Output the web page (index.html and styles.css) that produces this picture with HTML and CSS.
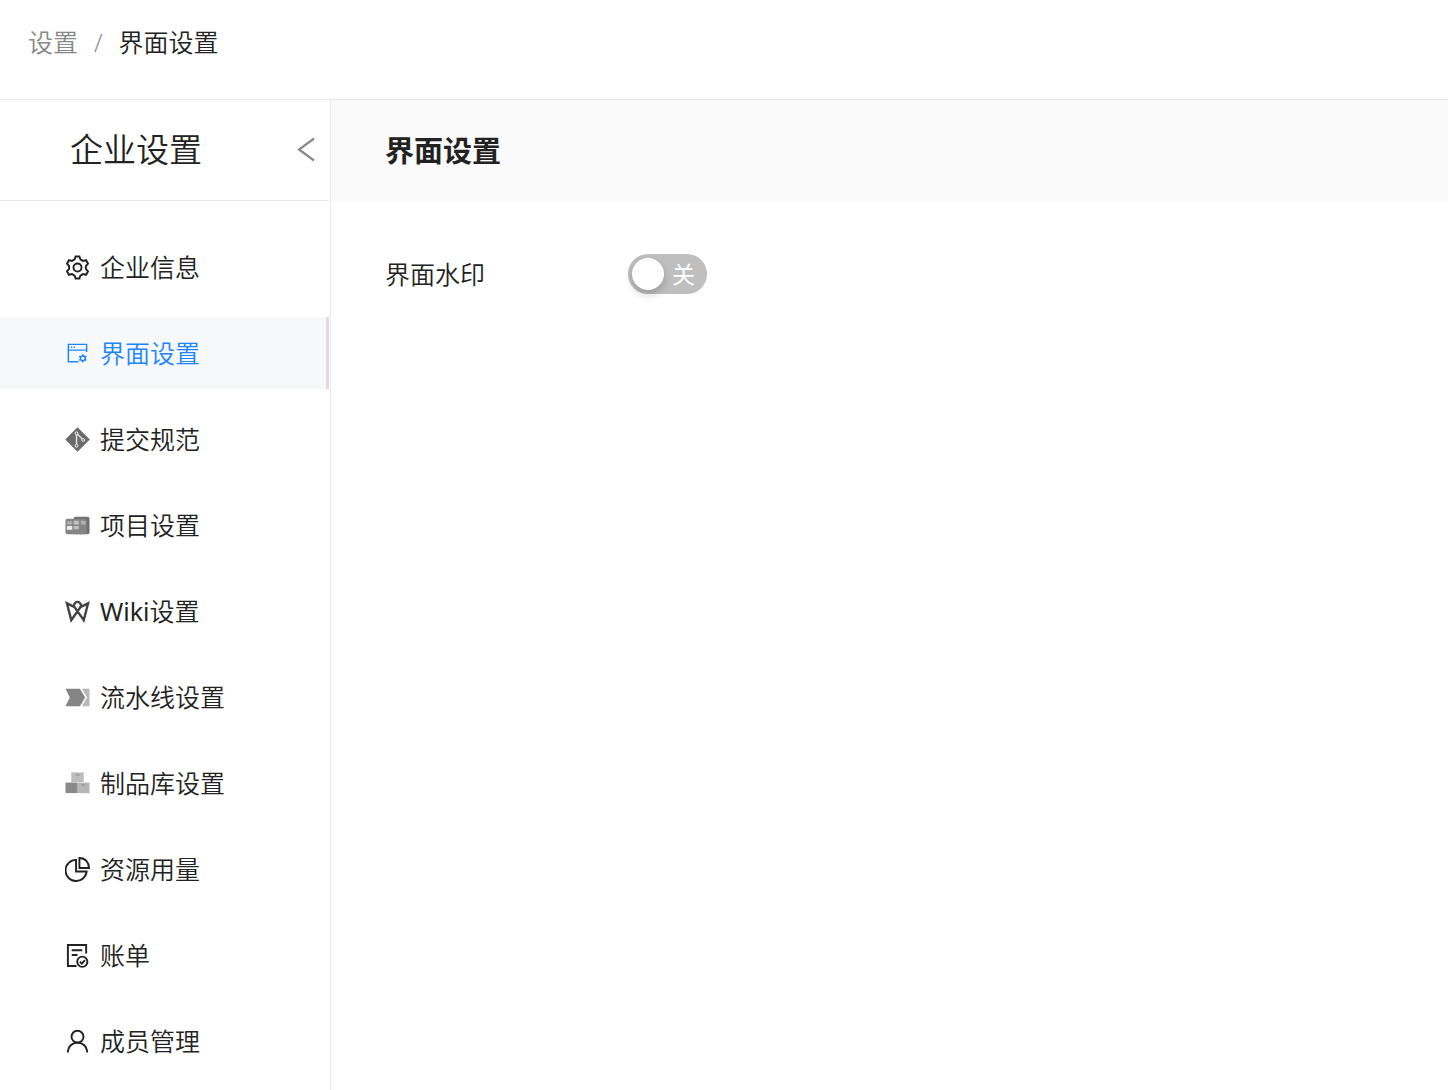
FILE: index.html
```html
<!DOCTYPE html>
<html lang="zh-CN">
<head>
    <meta charset="utf-8">
    <title>界面设置</title>
    <link rel="stylesheet" href="styles.css">
</head>
<body>
    <nav class="breadcrumb">
        <a href="#">设置</a>
        <span class="separator">/</span>
        <span class="current">界面设置</span>
    </nav>
    <div class="container">
        <aside class="sidebar">
            <header class="sidebar-header">
                <h2>企业设置</h2>
                <button type="button" class="collapse" aria-label="收起">
                    <svg width="18" height="26" viewBox="0 0 18 26"><path d="M17 1.500 2 12.500l15 11" fill="none" stroke="#8a8a8a" stroke-width="2.200"/></svg>
                </button>
            </header>
            <ul class="menu">
                <li><a href="#">
                    <svg class="icon line" viewBox="0 0 26 26"><path d="M10 4.600 11 1.500h4l1 3.100 2.700 1.500 3.200-.7 2 3.500L21.700 11.500v3l2.200 2.600-2 3.500-3.200-.7-2.700 1.500-1 3.100h-4l-1-3.100-2.700-1.500-3.200.7-2-3.500 2.200-2.600v-3L2.100 8.900l2-3.500 3.200.7z"/><circle cx="13" cy="13" r="4.200"/></svg>
                    企业信息</a></li>
                <li class="active"><a href="#">
                    <svg class="icon thin" viewBox="0 0 26 26"><path d="M14 21.500H3.500V3.500h19v8M3.500 9.500h19M6 6.500h1.500M9 6.500h1.500"/><circle cx="18.500" cy="18" r="2.500"/><path d="M18.500 13.700v1.800M18.500 20.500v1.800M14.800 15.800l1.500 1M20.700 19.200l1.500 1M22.200 15.800l-1.500 1M16.300 19.200l-1.500 1"/></svg>
                    界面设置</a></li>
                <li><a href="#">
                    <svg class="icon" viewBox="0 0 26 26"><path d="M13 .8 25.200 13 13 25.200.8 13z" fill="#6b6b6b" stroke="#6b6b6b" stroke-linejoin="round"/><path d="M12 7v12.500M12.500 7l6.500 6.500" fill="none" stroke="#e4e4e4" stroke-width="1.500"/><g fill="#777" stroke="#eee"><circle cx="12" cy="6.500" r="1.500"/><circle cx="12" cy="19.500" r="1.500"/><circle cx="19" cy="13.500" r="1.500"/></g></svg>
                    提交规范</a></li>
                <li><a href="#">
                    <svg class="icon" viewBox="0 0 26 26"><path d="M9 6q0-2 2-2h12.500Q25.500 4 25.500 6v14q0 2-2 2H9z" fill="#707070"/><rect x=".5" y="6" width="22" height="16" rx="2" fill="#858585"/><path d="M2 8.500h5.500v3.500H2zM16.500 8h5v4h-5z" fill="#b0b0b0"/><path d="M9 8h5.500v4H9zM9 13.500h5.500V17H9z" fill="#c0c0c0"/><path d="M2 13.500h5.500V17.500H2z" fill="#eee"/></svg>
                    项目设置</a></li>
                <li><a href="#">
                    <svg class="icon wiki" viewBox="0 0 26 26"><path d="M10 8.500 2 4.500 6.500 22 15.600 9.200A3.600 3.600 0 1 0 10.400 9.200L19.500 22 24 4.500l-8 4"/></svg>
                    <span><span class="latin">Wiki</span>设置</span></a></li>
                <li><a href="#">
                    <svg class="icon" viewBox="0 0 26 26"><path d="M.5 4h15l5.500 9-5.500 9H.5L5 13z" fill="#858585"/><path d="M17.500 4h8v18h-8l5.500-9z" fill="#b8b8b8"/></svg>
                    流水线设置</a></li>
                <li><a href="#">
                    <svg class="icon" viewBox="0 0 26 26"><path d="M6.500 1.500h13v10h-13z" fill="#bdbdbd"/><path d="M.5 12h12v11H.5z" fill="#8a8a8a"/><path d="M12.500 12h13v11h-13z" fill="#b5b5b5"/><path d="M11 4h4M5 14.500h3M17.500 14.500h3.500" stroke="#888" /></svg>
                    制品库设置</a></li>
                <li><a href="#">
                    <svg class="icon line" viewBox="0 0 26 26"><path d="M11.500 3A11 11 0 1 0 22.500 15h-11z"/><path d="M15 1v10.500h10C25 5.500 21 1 15 1z"/></svg>
                    资源用量</a></li>
                <li><a href="#">
                    <svg class="icon line" viewBox="0 0 26 26"><path d="M12 24H3V2h19v9M7 7.500h11M7 12.500h6"/><circle cx="18" cy="19.500" r="5.300"/><path d="m15.500 19.500 2 2 3.200-3.700"/></svg>
                    账单</a></li>
                <li><a href="#">
                    <svg class="icon line" viewBox="0 0 26 26"><circle cx="13" cy="8" r="6.200"/><path d="M3 24.500V23q1-8 10-9 9 1 10 9v1.500"/></svg>
                    成员管理</a></li>
            </ul>
        </aside>
        <main class="content">
            <header class="content-header">
                <h1>界面设置</h1>
            </header>
            <div class="form-row">
                <label for="watermark">界面水印</label>
                <div class="switch">
                    <input type="checkbox" id="watermark">
                    <span class="switch-text">关</span>
                </div>
            </div>
        </main>
    </div>
</body>
</html>
```

FILE: styles.css
```css
* {
    box-sizing: border-box;
}
body {
    margin: 0;
    min-height: 100vh;
    display: flex;
    flex-direction: column;
    font-family: "Open Sans", "Noto Sans CJK SC", sans-serif;
    font-size: 25px;
    font-weight: 350;
    line-height: 36px;
    color: #222;
    background: #fff;
}
a {
    color: inherit;
    text-decoration: none;
}
h1, h2 {
    margin: 0;
}

/* breadcrumb */
.breadcrumb {
    display: flex;
    gap: 16px;
    height: 100px;
    padding: 24px 28px;
    border-bottom: 1px solid #e8e8ec;
}
.breadcrumb a,
.separator {
    color: #888;
}

.container {
    display: flex;
    flex: 1;
}

/* sidebar */
.sidebar {
    flex: none;
    width: 331px;
    padding-right: 1px;
    border-right: 1px solid #e8e8ec;
}
.sidebar-header {
    display: flex;
    align-items: center;
    justify-content: space-between;
    height: 101px;
    padding: 0 14px 0 70px;
    border-bottom: 1px solid #e8e8ec;
}
.sidebar-header h2 {
    font-size: 33px;
    font-weight: 350;
}
.collapse {
    display: flex;
    padding: 0;
    border: 0;
    background: none;
    cursor: pointer;
}
.menu {
    display: flex;
    flex-direction: column;
    gap: 14px;
    margin: 0;
    padding: 30px 0 10px;
    list-style: none;
}
.menu a {
    display: flex;
    align-items: center;
    gap: 10px;
    height: 72px;
    padding-left: 65px;
}
.menu .active {
    color: #1c86ff;
    background: #f7f8fa;
    border-right: 3px solid #e2d9df;
}
.icon {
    flex: none;
    width: 25px;
    height: 25px;
}
.line, .thin, .wiki {
    fill: none;
    stroke: currentColor;
    stroke-width: 2;
}
.thin {
    stroke-width: 1.500;
}
.wiki {
    stroke: #444;
    stroke-width: 2.500;
}
.latin {
    font-family: "Noto Sans", sans-serif;
    font-weight: 400;
}

/* content */
.content {
    flex: 1;
}
.content-header {
    display: flex;
    align-items: center;
    height: 101px;
    padding: 0 54px;
    background: #fafafa;
}
.content-header h1 {
    font-size: 29px;
    font-weight: 700;
}
.form-row {
    display: flex;
    align-items: center;
    padding: 53px 54px;
}
.form-row label {
    width: 243px;
}
.switch {
    position: relative;
}
.switch input {
    display: block;
    appearance: none;
    width: 79px;
    height: 40px;
    margin: 0;
    border-radius: 20px;
    background: #bfbfbf;
    cursor: pointer;
}
.switch input::before {
    content: "";
    display: block;
    width: 32px;
    height: 32px;
    margin: 4px;
    border-radius: 50%;
    background: #fff;
    box-shadow: 0 4px 8px rgba(0, 0, 0, 0.2);
}
.switch input:checked {
    background: #1c86ff;
}
.switch input:checked::before {
    margin-left: 43px;
}
.switch-text {
    position: absolute;
    top: 2px;
    right: 12px;
    font-size: 23px;
    font-weight: 400;
    color: #fff;
    pointer-events: none;
}
```
